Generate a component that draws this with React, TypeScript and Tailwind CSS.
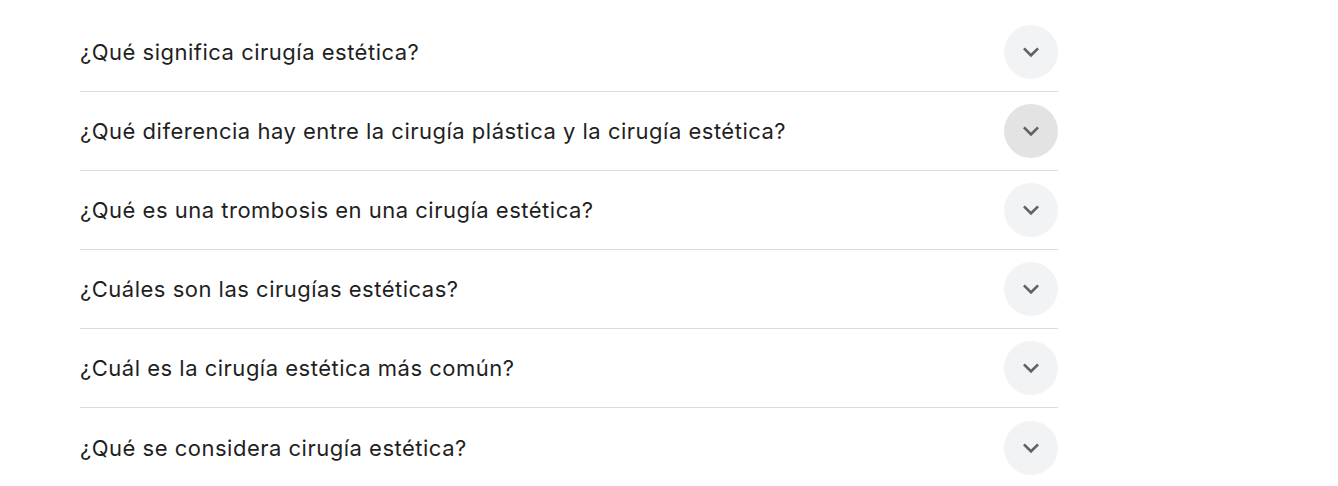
import React from "react";

const questions = [
  "¿Qué significa cirugía estética?",
  "¿Qué diferencia hay entre la cirugía plástica y la cirugía estética?",
  "¿Qué es una trombosis en una cirugía estética?",
  "¿Cuáles son las cirugías estéticas?",
  "¿Cuál es la cirugía estética más común?",
  "¿Qué se considera cirugía estética?",
];

function Chevron() {
  return (
    <svg width="32" height="32" viewBox="0 0 24 24" fill="#5f6368">
      <path d="M16.59 8.59L12 13.17 7.41 8.59 6 10l6 6 6-6z" />
    </svg>
  );
}

export default function App() {
  return (
    <div className="w-[1338px] h-[486px] bg-white pt-[13px] pl-[80px]" style={{ fontFamily: "Inter, Roboto, Arial, sans-serif" }}>
      <div className="w-[978px] flex flex-col">
        {questions.map((q, i) => (
          <div
            key={i}
            className={`flex items-center justify-between h-[79px] ${i < questions.length - 1 ? "border-b border-[#dadce0]" : ""}`}
          >
            <span className="text-[22px] leading-[28px] tracking-[0.5px] text-[#1f1f1f]">{q}</span>
            <div
              className={`w-[54px] h-[54px] rounded-full flex items-center justify-center ${i === 1 ? "bg-[#e3e3e3]" : "bg-[#f1f3f4]"}`}
            >
              <Chevron />
            </div>
          </div>
        ))}
      </div>
    </div>
  );
}
